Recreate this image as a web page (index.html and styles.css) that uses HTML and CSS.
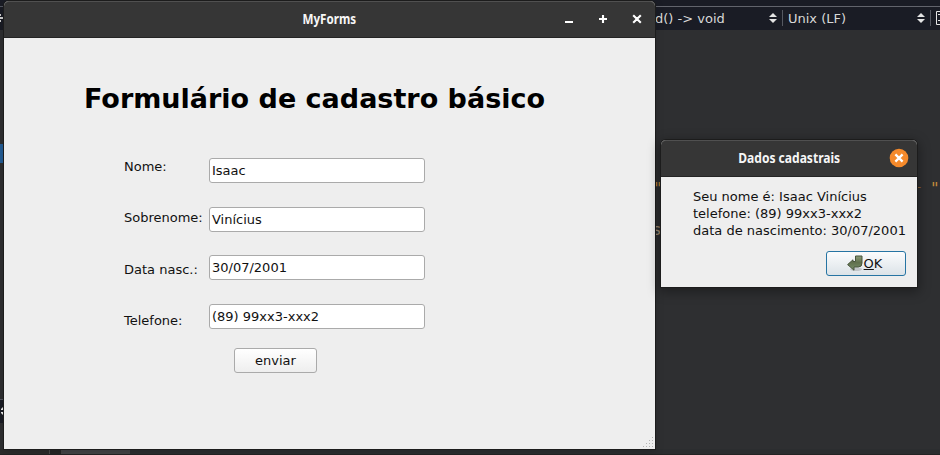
FILE: index.html
```html
<!DOCTYPE html>
<html lang="pt-BR">
<head>
<meta charset="utf-8">
<title>MyForms</title>
<link rel="stylesheet" href="styles.css">
</head>
<body>
<div class="desktop">
  <div class="editor">
    <div class="tabs"><i class="t1"></i><i class="t2"></i><i class="t3"></i><i class="t4"></i><i class="t5"></i></div>
    <div class="toolbar">
      <span class="symbol">d() -&gt; void</span>
      <svg class="spin" width="8" height="10" viewBox="0 0 8 10"><path d="M4 0L8 4H0zM0 6H8L4 10z"/></svg>
      <span class="encoding">Unix (LF)</span>
      <svg class="spin" width="8" height="10" viewBox="0 0 8 10"><path d="M4 0L8 4H0zM0 6H8L4 10z"/></svg>
      <span class="split"><svg width="12" height="14" viewBox="0 0 12 14"><path d="M.5 .5H11.5V13.5H.5zM2 3.5H5M2 9.5H5" fill="none" stroke="#e4e4e4"/></svg></span>
    </div>
    <div class="code"></div>
    <div class="status"><i class="s1"></i><i class="s2"></i><i class="s3"></i></div>
  </div>
  <div class="selection"></div>
  <div class="edge edge-top"><svg width="4" height="8" viewBox="0 0 4 8"><path d="M0 3H4V5H0zM0 0H1V2H0zM3 0H4V2H3zM0 6H1V8H0zM3 6H4V8H3z" fill="#d0d0d0"/></svg></div>
  <div class="edge edge-bottom"><svg width="4" height="8" viewBox="0 0 4 8"><path d="M4 0V3H1V2L3 0zM1 5H4V8H3L1 6z" fill="#f0f0f0"/></svg></div>
  <span class="snippet q1">"</span><span class="snippet q2">s</span><span class="snippet q3">_</span><span class="snippet q4">"</span>

  <section class="window main">
    <header class="titlebar">
      <h2 class="caption">MyForms</h2>
      <svg class="controls" width="76" height="12" viewBox="0 0 76 12"><path d="M1 9H9M35 6H43M39 2V10M69.2 2.2L76.8 9.8M76.8 2.2L69.2 9.8" fill="none" stroke="#fff" stroke-width="2.1"/></svg>
    </header>
    <div class="content">
      <h1 class="heading">Formulário de cadastro básico</h1>
      <div class="form">
        <div class="labels"><label>Nome:</label><label>Sobrenome:</label><label>Data nasc.:</label><label>Telefone:</label></div>
        <div class="fields"><div class="field">Isaac</div><div class="field">Vinícius</div><div class="field">30/07/2001</div><div class="field">(89) 99xx3-xxx2</div></div>
      </div>
      <button class="button send">enviar</button>
      <svg class="grip" width="10" height="10" viewBox="0 0 10 10"><path d="M9 0h1v1H9zM6 3h1v1H6zM9 3h1v1H9zM3 6h1v1H3zM6 6h1v1H6zM9 6h1v1H9zM0 9h1v1H0zM3 9h1v1H3zM6 9h1v1H6zM9 9h1v1H9z" fill="#b4b4b4"/></svg>
    </div>
  </section>

  <section class="window dialog">
    <header class="titlebar">
      <h2 class="caption">Dados cadastrais</h2>
      <svg class="close" width="20" height="20" viewBox="0 0 20 20"><circle cx="10" cy="10" r="9.3" fill="#f58a2b"/><path d="M6.4 6.4L13.6 13.6M13.6 6.4L6.4 13.6" stroke="#fff" stroke-width="2.3"/></svg>
    </header>
    <div class="message">
      <p>Seu nome é: Isaac Vinícius</p>
      <p>telefone: (89) 99xx3-xxx2</p>
      <p>data de nascimento: 30/07/2001</p>
      <button class="button ok">
        <svg width="16" height="17" viewBox="0 0 16 17"><defs><linearGradient id="g" x2="0" y2="1"><stop offset="0" stop-color="#8c9c78"/><stop offset=".45" stop-color="#60704d"/><stop offset="1" stop-color="#78906a"/></linearGradient></defs><ellipse cx="9" cy="14.3" rx="6" ry="1.8" fill="#000" opacity=".15"/><path d="M8.5 1H15V8Q15 12 11.5 12H7V15.2L.6 9.6L6 4.8V6.5H8.5z" fill="url(#g)" stroke="#47543c"/></svg><span><u>O</u>K</span>
      </button>
    </div>
  </section>
</div>
</body>
</html>
```
FILE: styles.css
```css
* { box-sizing: border-box; }
body { margin: 0; font: 13px/17px "DejaVu Sans", sans-serif; color: #111; }
h1, h2, p { margin: 0; }
.desktop { position: relative; width: 940px; height: 455px; overflow: hidden; background: #2e2f31; }
.editor { display: flex; flex-direction: column; height: 455px; }
.tabs { display: flex; height: 7px; background: #1a1c25; border-bottom: 1px solid #62646c; }
.tabs i { height: 1px; background: #85858a; }
.t1 { width: 1px; margin-left: 9px; }
.t2 { width: 8px; margin-left: 31px; }
.t3 { width: 13px; margin-left: 40px; }
.t4 { width: 9px; margin-left: 53px; }
.t5 { width: 2px; margin-left: 13px; }
.toolbar { display: flex; align-items: center; height: 23px; padding: 0 0 1px 655px; background: #1a1c25; color: #d8d8d8; white-space: nowrap; }
.symbol { flex: none; width: 114px; }
.spin { fill: #e4e4e4; flex: none; }
.encoding { flex: none; width: 135px; height: 16px; line-height: 18px; margin-left: 5px; padding-left: 5px; border-left: 1px solid #555861; }
.split { display: flex; flex: none; align-items: center; height: 16px; width: 16px; margin-left: 5px; padding-left: 5px; border-left: 1px solid #555861; overflow: hidden; }
.split svg { flex: none; }
.code { flex: 1; }
.status { display: flex; height: 6px; background: #2b2d2f; border-bottom: 1px solid #232323; }
.s1 { width: 50px; background: #2b2b2b; border-right: 1px solid #4a4a4a; }
.s2 { width: 12px; background: #252525; border-right: 1px solid #444; }
.s3 { width: 68px; background: #424346; }
.selection { position: absolute; left: 0; top: 144px; width: 4px; height: 19px; background: #245d96; }
.edge { position: absolute; left: 0; width: 4px; background: #1a1c25; }
.edge-top { top: 6px; height: 24px; padding-top: 7px; border-top: 1px solid #555861; }
.edge-bottom { top: 399px; height: 24px; padding-top: 7px; border-top: 1px solid #555861; }
.edge svg { display: block; }
.snippet { position: absolute; color: #c48a3c; font: 16px/17px "DejaVu Sans Mono", monospace; }
.q1 { left: 653px; top: 180px; }
.q2 { left: 652px; top: 221px; color: #a29078; }
.q3 { left: 911px; top: 170px; }
.q4 { left: 930px; top: 180px; }
.window { position: absolute; background: #eee; border-radius: 5px 5px 0 0; box-shadow: 0 0 0 1px #1c1c1c, 0 3px 12px 2px rgba(0,0,0,.35); }
.main { left: 4px; top: 1px; width: 651px; height: 448px; box-shadow: 0 0 0 1px #1c1c1c, 0 2px 10px rgba(0,0,0,.2); }
.dialog { left: 661px; top: 140px; width: 256px; height: 147px; }
.titlebar { position: relative; display: flex; align-items: center; justify-content: center; height: 37px; background: #363636; border-top: 1px solid #505050; border-bottom: 1px solid #242424; border-radius: 5px 5px 0 0; }
.caption { font: bold 14px/18px "Noto Sans", sans-serif; color: #f6f6f6; transform: translateY(-1px) scaleX(.86); }
.main .caption { transform: translateY(-1px) scaleX(.83); }
.controls { position: absolute; left: 560px; top: 11px; overflow: visible; }
.close { position: absolute; right: 8px; top: 7px; }
.content { position: relative; height: 411px; padding: 44px 0 0 80px; }
.heading { font-size: 27px; line-height: 34px; font-weight: bold; color: #000; white-space: nowrap; }
.form { display: flex; padding: 42px 0 0 40px; }
.labels { display: flex; flex-direction: column; width: 85px; gap: 34.33px; white-space: nowrap; }
.fields { display: flex; flex-direction: column; gap: 23.67px; }
.field { width: 216px; height: 25px; padding: 3px 2px; background: #fff; border: 1px solid #aaa; border-radius: 3px; }
.button { display: flex; align-items: center; justify-content: center; font: inherit; color: #111; height: 25px; padding: 0; border: 1px solid #aaa; border-radius: 3px; background: linear-gradient(#fff, #eee); }
.send { width: 83px; margin: 19px 0 0 150px; }
.grip { position: absolute; right: 2px; bottom: 2px; }
.message { padding: 11px 11px 0 32px; white-space: nowrap; }
.ok { width: 80px; margin: 12px 0 0 auto; padding-right: 3px; gap: 1px; border-color: #2674a3; background: linear-gradient(#fbfcfd, #dce3e8); }
```
